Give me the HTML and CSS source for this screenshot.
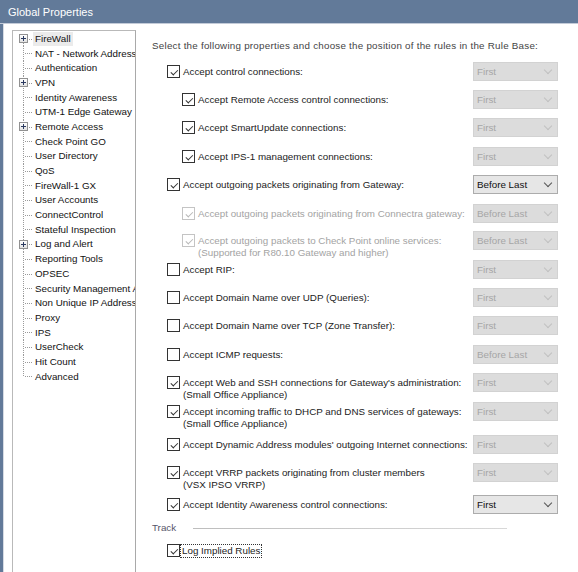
FILE: index.html
```html
<!DOCTYPE html>
<html>
<head>
<meta charset="utf-8">
<title>Global Properties</title>
<link rel="stylesheet" href="styles.css">
</head>
<body>
<div class="titlebar">Global Properties</div>
<div class="frame">
  <div class="tree">
    <div class="node first"><span class="conn"><span class="plus"><svg width="7" height="7" viewBox="0 0 7 7"><path d="M1 3.5H6M3.5 1V6" stroke="#2b3a60" stroke-width="1"/></svg></span></span><span class="label sel">FireWall</span></div>
    <div class="node"><span class="conn"></span><span class="label">NAT - Network Address Translation</span></div>
    <div class="node"><span class="conn"></span><span class="label">Authentication</span></div>
    <div class="node"><span class="conn"><span class="plus"><svg width="7" height="7" viewBox="0 0 7 7"><path d="M1 3.5H6M3.5 1V6" stroke="#2b3a60" stroke-width="1"/></svg></span></span><span class="label">VPN</span></div>
    <div class="node"><span class="conn"></span><span class="label">Identity Awareness</span></div>
    <div class="node"><span class="conn"></span><span class="label">UTM-1 Edge Gateway</span></div>
    <div class="node"><span class="conn"><span class="plus"><svg width="7" height="7" viewBox="0 0 7 7"><path d="M1 3.5H6M3.5 1V6" stroke="#2b3a60" stroke-width="1"/></svg></span></span><span class="label">Remote Access</span></div>
    <div class="node"><span class="conn"></span><span class="label">Check Point GO</span></div>
    <div class="node"><span class="conn"></span><span class="label">User Directory</span></div>
    <div class="node"><span class="conn"></span><span class="label">QoS</span></div>
    <div class="node"><span class="conn"></span><span class="label">FireWall-1 GX</span></div>
    <div class="node"><span class="conn"></span><span class="label">User Accounts</span></div>
    <div class="node"><span class="conn"></span><span class="label">ConnectControl</span></div>
    <div class="node"><span class="conn"></span><span class="label">Stateful Inspection</span></div>
    <div class="node"><span class="conn"><span class="plus"><svg width="7" height="7" viewBox="0 0 7 7"><path d="M1 3.5H6M3.5 1V6" stroke="#2b3a60" stroke-width="1"/></svg></span></span><span class="label">Log and Alert</span></div>
    <div class="node"><span class="conn"></span><span class="label">Reporting Tools</span></div>
    <div class="node"><span class="conn"></span><span class="label">OPSEC</span></div>
    <div class="node"><span class="conn"></span><span class="label">Security Management Access</span></div>
    <div class="node"><span class="conn"></span><span class="label">Non Unique IP Address Ranges</span></div>
    <div class="node"><span class="conn"></span><span class="label">Proxy</span></div>
    <div class="node"><span class="conn"></span><span class="label">IPS</span></div>
    <div class="node"><span class="conn"></span><span class="label">UserCheck</span></div>
    <div class="node"><span class="conn"></span><span class="label">Hit Count</span></div>
    <div class="node last"><span class="conn"></span><span class="label">Advanced</span></div>
  </div>

  <div class="panel">
    <div class="intro">Select the following properties and choose the position of the rules in the Rule Base:</div>
    <div class="grid">
      <div class="opt"><span class="cb on"></span><span class="txt">Accept control connections:</span></div>
      <div class="dd dis"><span>First</span><i class="chev"></i></div>

      <div class="opt sub"><span class="cb on"></span><span class="txt">Accept Remote Access control connections:</span></div>
      <div class="dd dis"><span>First</span><i class="chev"></i></div>

      <div class="opt sub"><span class="cb on"></span><span class="txt">Accept SmartUpdate connections:</span></div>
      <div class="dd dis"><span>First</span><i class="chev"></i></div>

      <div class="opt sub"><span class="cb on"></span><span class="txt">Accept IPS-1 management connections:</span></div>
      <div class="dd dis"><span>First</span><i class="chev"></i></div>

      <div class="opt"><span class="cb on"></span><span class="txt">Accept outgoing packets originating from Gateway:</span></div>
      <div class="dd"><span>Before Last</span><i class="chev"></i></div>

      <div class="opt sub off"><span class="cb on"></span><span class="txt">Accept outgoing packets originating from Connectra gateway:</span></div>
      <div class="dd dis"><span>Before Last</span><i class="chev"></i></div>

      <div class="opt sub off"><span class="cb on"></span><span class="txt">Accept outgoing packets to Check Point online services:<br>(Supported for R80.10 Gateway and higher)</span></div>
      <div class="dd dis"><span>Before Last</span><i class="chev"></i></div>

      <div class="opt"><span class="cb"></span><span class="txt">Accept RIP:</span></div>
      <div class="dd dis"><span>First</span><i class="chev"></i></div>

      <div class="opt"><span class="cb"></span><span class="txt">Accept Domain Name over UDP (Queries):</span></div>
      <div class="dd dis"><span>First</span><i class="chev"></i></div>

      <div class="opt"><span class="cb"></span><span class="txt">Accept Domain Name over TCP (Zone Transfer):</span></div>
      <div class="dd dis"><span>First</span><i class="chev"></i></div>

      <div class="opt"><span class="cb"></span><span class="txt">Accept ICMP requests:</span></div>
      <div class="dd dis"><span>Before Last</span><i class="chev"></i></div>

      <div class="opt"><span class="cb on"></span><span class="txt">Accept Web and SSH connections for Gateway's administration:<br>(Small Office Appliance)</span></div>
      <div class="dd dis"><span>First</span><i class="chev"></i></div>

      <div class="opt"><span class="cb on"></span><span class="txt">Accept incoming traffic to DHCP and DNS services of gateways:<br>(Small Office Appliance)</span></div>
      <div class="dd dis"><span>First</span><i class="chev"></i></div>

      <div class="opt"><span class="cb on"></span><span class="txt">Accept Dynamic Address modules' outgoing Internet connections:</span></div>
      <div class="dd dis"><span>First</span><i class="chev"></i></div>

      <div class="opt"><span class="cb on"></span><span class="txt">Accept VRRP packets originating from cluster members<br>(VSX IPSO VRRP)</span></div>
      <div class="dd dis"><span>First</span><i class="chev"></i></div>

      <div class="opt"><span class="cb on"></span><span class="txt">Accept Identity Awareness control connections:</span></div>
      <div class="dd"><span>First</span><i class="chev"></i></div>
    </div>

    <div class="track"><span class="track-label">Track</span><span class="track-line"></span></div>
    <div class="opt log"><span class="cb on"></span><span class="focus">Log Implied Rules</span></div>
  </div>
</div>
</body>
</html>
```

FILE: styles.css
```css
html, body {
  margin: 0;
  padding: 0;
}
body {
  width: 578px;
  height: 572px;
  overflow: hidden;
  background: #ffffff;
  font-family: "Liberation Sans", Arial, sans-serif;
  font-size: 9.8px;
  color: #1e1e1e;
}
.titlebar {
  height: 23px;
  line-height: 25px;
  background: #627a99;
  color: #ffffff;
  font-size: 11px;
  padding-left: 8px;
  border-bottom: 1px solid #c3cbd8;
}
.frame {
  display: flex;
  align-items: flex-start;
  border-left: 3px solid #627a99;
  height: 548px;
  overflow: hidden;
}
.frame::before {
  content: "";
  width: 1px;
  align-self: stretch;
  background: #d6dbe3;
}

/* tree */
.tree {
  flex: 0 0 124px;
  margin-left: 8px;
  margin-top: 6px;
  width: 124px;
  height: 542px;
  border: 1px solid #b9b9b9;
  border-right-color: #a9a9a9;
  border-bottom: none;
  overflow: hidden;
  box-sizing: border-box;
  padding-top: 0.5px;
}
.node {
  display: flex;
  align-items: center;
  height: 14.7px;
  white-space: nowrap;
}
.conn {
  flex: 0 0 20px;
  height: 100%;
  display: flex;
  align-items: center;
  background-image:
    repeating-linear-gradient(to bottom, #9a9a9a 0 1px, transparent 1px 2px),
    repeating-linear-gradient(to right, #9a9a9a 0 1px, transparent 1px 2px);
  background-size: 1px 100%, 8px 1px;
  background-position: 10px 0, 12px 7px;
  background-repeat: no-repeat;
}
.node.first .conn {
  background-size: 1px 8px, 8px 1px;
  background-position: 10px 7px, 12px 7px;
}
.node.last .conn {
  background-size: 1px 8px, 8px 1px;
  background-position: 10px 0, 12px 7px;
}
.plus {
  margin-left: 6px;
  width: 9px;
  height: 9px;
  box-sizing: border-box;
  border: 1px solid #919191;
  background: linear-gradient(#ffffff, #e2e2e2);
  display: flex;
  align-items: center;
  justify-content: center;
}
.plus svg { display: block; }
.label {
  padding: 0 2px;
  line-height: 14px;
  color: #111;
}
.label.sel {
  background: #ebebeb;
}

/* panel */
.panel {
  flex: 1;
  padding-left: 16px;
  padding-top: 16px;
}
.intro {
  line-height: 12px;
  color: #444;
  margin-bottom: 10px;
  white-space: nowrap;
  letter-spacing: 0.24px;
}
.grid {
  display: grid;
  grid-template-columns: 321px 85px;
  grid-template-rows: 28px 28px 29px 28px 29px 27px 29px 28px 28px 29px 28px 29px 33px 28px 32px 27px;
  align-items: start;
}
.opt {
  display: flex;
  align-items: flex-start;
  padding-left: 15px;
  white-space: nowrap;
}
.opt.sub { padding-left: 30px; }
.cb {
  flex: 0 0 13px;
  width: 13px;
  height: 13px;
  box-sizing: border-box;
  margin-top: 3px;
  border: 1px solid #333;
  background: #fff;
  position: relative;
}
.cb.on::after {
  content: "";
  position: absolute;
  left: 2.5px;
  top: 0.5px;
  width: 6px;
  height: 3px;
  border-left: 1px solid #333;
  border-bottom: 1px solid #333;
  transform: translate(0, 3px) rotate(-45deg);
  transform-origin: 3px 2px;
}
.txt {
  margin-left: 3px;
  padding-top: 3.5px;
  line-height: 12px;
  color: #222;
}
.opt.off .cb { border-color: #c4c4c4; }
.opt.off .cb.on::after { border-color: #b8b8b8; }
.opt.off .txt { color: #a3a3a3; }

.dd {
  height: 19px;
  box-sizing: border-box;
  border: 1px solid #acacac;
  background: #e6e6e6;
  display: flex;
  align-items: center;
  justify-content: space-between;
  padding: 0 5px 0 3px;
  color: #111;
  line-height: 17px;
}
.dd.dis {
  background: #dcdcdc;
  border-color: #d2d2d2;
  color: #a6a6a6;
}
.chev {
  width: 5px;
  height: 5px;
  border-right: 1px solid #555;
  border-bottom: 1px solid #555;
  transform: rotate(45deg);
  margin-top: -4px;
  margin-right: 1px;
}
.dd.dis .chev { border-color: #c0c0c0; }

.track {
  display: flex;
  align-items: center;
  height: 12px;
  line-height: 12px;
}
.track-label {
  color: #55556a;
  width: 41px;
}
.track-line {
  width: 314px;
  height: 1px;
  background: linear-gradient(to right, #bdbdbd, #d8d8d8);
}
.opt.log {
  margin-top: 7px;
  padding-left: 15px;
}
.focus {
  margin-top: 3px;
  border: 1px dotted #333;
  line-height: 12px;
  padding: 0 1px;
  color: #222;
}
```
